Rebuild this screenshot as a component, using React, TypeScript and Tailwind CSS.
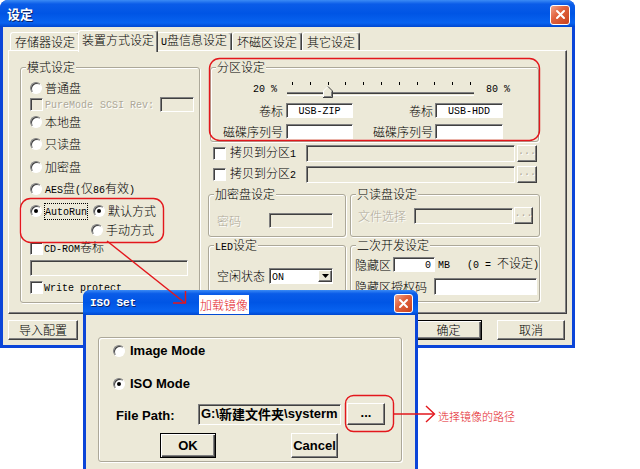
import React from 'react';

const raised =
  'border border-t-white border-l-white border-r-[#404040] border-b-[#404040] shadow-[inset_-1px_-1px_0_#808080] bg-[#ECE9D8]';
const sunken =
  'border border-t-[#808080] border-l-[#808080] border-r-white border-b-white shadow-[inset_1px_1px_0_#404040]';
const deflt =
  'border border-black shadow-[inset_1px_1px_0_#fff,inset_-1px_-1px_0_#404040,inset_-2px_-2px_0_#808080] bg-[#ECE9D8]';
const etched = 'rounded-[3px] border border-[#aca899] shadow-[inset_1px_1px_0_#fff,1px_1px_0_#fff]';
const dis = 'text-[#aca899] [text-shadow:1px_1px_0_#fff]';
const titleGrad =
  'bg-[linear-gradient(to_bottom,#3b8bf5_0%,#0a5ce8_15%,#0055e5_50%,#0863f0_85%,#0047d0_100%)]';

// 把 ASCII 部分换成等宽小字，模拟宋体的半角字符
function Mx({ s, className = '' }: { s: string; className?: string }) {
  const parts = s.split(/([\x20-\x7e]+)/).filter((p) => p !== '');
  return (
    <span className={`whitespace-pre ${className}`}>
      {parts.map((p, i) =>
        /^[\x20-\x7e]+$/.test(p) ? (
          <span key={i} className="font-['Liberation_Mono',monospace] text-[10px]">
            {p}
          </span>
        ) : (
          <span key={i}>{p}</span>
        )
      )}
    </span>
  );
}

function Group({ title, className = '', children }: { title: string; className?: string; children?: React.ReactNode }) {
  return (
    <div className={`relative ${etched} ${className}`}>
      <span className="absolute -top-[8px] left-[5px] px-[1px] bg-[#ECE9D8] leading-[14px]">
        <Mx s={title} />
      </span>
      {children}
    </div>
  );
}

function Radio({ on }: { on?: boolean }) {
  return (
    <span className="relative inline-flex shrink-0 w-[12px] h-[12px] rounded-full border border-t-[#808080] border-l-[#808080] border-r-white border-b-white bg-white shadow-[inset_1px_1px_0_#404040]">
      {on && <span className="absolute left-[3px] top-[3px] w-[4px] h-[4px] rounded-full bg-black" />}
    </span>
  );
}

function Check({ dim }: { dim?: boolean }) {
  return <span className={`inline-block shrink-0 w-[13px] h-[13px] ${sunken} ${dim ? 'bg-[#ECE9D8]' : 'bg-white'}`} />;
}

function Dots({ dim }: { dim?: boolean }) {
  return (
    <span className={`font-['Liberation_Mono',monospace] text-[10px] leading-none pb-[3px] ${dim ? dis : ''}`}>...</span>
  );
}

function CloseBtn({ className = '' }: { className?: string }) {
  return (
    <div
      className={`flex items-center justify-center rounded-[3px] border border-white bg-[linear-gradient(135deg,#f2a58c_0%,#e2643f_40%,#c9421d_100%)] ${className}`}
    >
      <svg width="11" height="11" viewBox="0 0 11 11">
        <path d="M2 2L9 9M9 2L2 9" stroke="#fff" strokeWidth="2" strokeLinecap="round" />
      </svg>
    </div>
  );
}

function Slider() {
  const ticks = Array.from({ length: 11 }, (_, i) => Math.round(10 + i * 17.8));
  return (
    <svg width="196" height="20" viewBox="0 0 196 20" className="ml-[5px] shrink-0">
      {ticks.map((x) => (
        <rect key={x} x={x} y={4} width={1} height={3} fill="#000" />
      ))}
      <rect x="5" y="14" width="187" height="1" fill="#808080" />
      <rect x="5" y="15" width="187" height="1" fill="#404040" />
      <rect x="5" y="17" width="187" height="1" fill="#fff" />
      <polygon points="41,19 41,13 46,8 51,13 51,19" fill="#ECE9D8" />
      <polyline points="41.5,19 41.5,13 46,8.5" fill="none" stroke="#fff" />
      <polyline points="46,8.5 50.5,13 50.5,19.5 41,19.5" fill="none" stroke="#404040" />
      <polyline points="49.5,13.5 49.5,18.5 42,18.5" fill="none" stroke="#808080" />
    </svg>
  );
}

function Tab({ active, children }: { active?: boolean; children: React.ReactNode }) {
  if (active)
    return (
      <div className="relative z-10 h-[22px] -mb-[2px] -mx-[2px] px-[3px] pb-[3px] flex items-center bg-[#ECE9D8] rounded-t-[3px] border border-b-0 border-t-white border-l-white border-r-[#404040] shadow-[inset_-1px_0_0_#808080]">
        {children}
      </div>
    );
  return (
    <div className="h-[18px] px-[4px] flex items-center rounded-t-[3px] border border-b-0 border-t-white border-l-white border-r-[#404040] shadow-[inset_-1px_0_0_#808080]">
      {children}
    </div>
  );
}

export default function App() {
  return (
    <div className="relative w-[640px] h-[469px] overflow-hidden bg-white text-black text-[12px] leading-[14px] font-light font-['Noto_Sans_CJK_SC',sans-serif]">
      {/* 主窗口 */}
      <div className="w-[575px] h-[348px] flex flex-col rounded-t-[8px] overflow-hidden bg-[#0b45d8]">
        <div className={`h-[27px] shrink-0 flex items-center justify-between pl-[7px] pr-[5px] ${titleGrad}`}>
          <span className="text-white font-bold text-[13px] [text-shadow:1px_1px_0_#0a246a]">设定</span>
          <CloseBtn className="w-[20px] h-[20px] mt-[2px]" />
        </div>

        <div className="flex-1 mx-[3px] mb-[3px] bg-[#ECE9D8] flex flex-col">
          {/* 标签页 */}
          <div className="relative z-10 h-[23px] shrink-0 flex items-end pl-[7px]">
            <Tab>存储器设定</Tab>
            <Tab active>装置方式设定</Tab>
            <Tab>
              <Mx s="U盘信息设定" />
            </Tab>
            <Tab>坏磁区设定</Tab>
            <Tab>其它设定</Tab>
          </div>

          {/* 面板 */}
          <div className="mx-[5px] h-[264px] shrink-0 flex pt-[16px] pl-[11px] border border-t-white border-l-white border-r-[#404040] border-b-[#404040] shadow-[inset_-1px_-1px_0_#808080]">
            <Group title="模式设定" className="w-[180px] h-[236px] pt-[12px] pl-[9px] flex flex-col">
              <div className="h-[16px] flex items-center">
                <Radio />
                <span className="ml-[3px]">普通盘</span>
              </div>
              <div className="h-[16px] flex items-center">
                <Check dim />
                <Mx s="PureMode" className={`ml-[2px] ${dis}`} />
                <Mx s="SCSI Rev:" className={`ml-[7px] ${dis}`} />
                <span className={`ml-[6px] w-[34px] h-[15px] ${sunken} bg-[#ECE9D8]`} />
              </div>
              <div className="h-[20px] flex items-center">
                <Radio />
                <span className="ml-[3px]">本地盘</span>
              </div>
              <div className="h-[24px] flex items-center">
                <Radio />
                <span className="ml-[3px]">只读盘</span>
              </div>
              <div className="h-[22px] flex items-center">
                <Radio />
                <span className="ml-[3px]">加密盘</span>
              </div>
              <div className="h-[22px] flex items-center">
                <Radio />
                <Mx s="AES盘(仅86有效)" className="ml-[3px]" />
              </div>
              <div className="h-[22px] flex items-center">
                <Radio on />
                <Mx s="AutoRun" className="ml-[2px] border border-dotted border-black leading-[12px]" />
                <span className="ml-[5px] flex items-center">
                  <Radio on />
                </span>
                <span className="ml-[3px]">默认方式</span>
              </div>
              <div className="h-[16px] flex items-center pl-[61px]">
                <Radio />
                <span className="ml-[3px]">手动方式</span>
              </div>
              <div className="h-[20px] flex items-center">
                <Check />
                <Mx s="CD-ROM卷标" className="ml-[1px]" />
              </div>
              <div className={`mt-[2px] w-[158px] h-[16px] ${sunken} bg-[#ECE9D8]`} />
              <div className="h-[22px] flex items-center">
                <Check />
                <Mx s="Write protect" className="ml-[1px]" />
              </div>
            </Group>

            <div className="ml-[8px] w-[332px] flex flex-col">
              <Group title="分区设定" className="ml-[2px] w-[329px] h-[75px] pt-[10px] shrink-0">
                <div className="h-[20px] flex items-center pl-[42px]">
                  <Mx s="20 %" className="inline-block w-[24px]" />
                  <Slider />
                  <Mx s="80 %" className="ml-[8px]" />
                </div>
                <div className="mt-[5px] grid grid-cols-[75px_67px_82px_68px] gap-y-[6px] items-center">
                  <span className="text-right pr-[3px]">卷标</span>
                  <div className={`h-[15px] ${sunken} bg-white flex items-center justify-center`}>
                    <Mx s="USB-ZIP" />
                  </div>
                  <span className="text-right pr-[2px]">卷标</span>
                  <div className={`h-[15px] ${sunken} bg-white flex items-center justify-center`}>
                    <Mx s="USB-HDD" />
                  </div>
                  <span className="text-right pr-[3px]">磁碟序列号</span>
                  <div className={`h-[15px] ${sunken} bg-white`} />
                  <span className="text-right pr-[2px]">磁碟序列号</span>
                  <div className={`h-[15px] ${sunken} bg-white`} />
                </div>
              </Group>

              <div className="mt-[2px] h-[18px] flex items-center shrink-0">
                <span className="ml-[5px] flex">
                  <Check />
                </span>
                <Mx s="拷贝到分区1" className="ml-[4px] inline-block w-[76px]" />
                <div className={`w-[209px] h-[17px] ${sunken} bg-[#ECE9D8]`} />
                <div className={`ml-[2px] w-[20px] h-[17px] ${raised} flex items-center justify-center`}>
                  <Dots dim />
                </div>
              </div>
              <div className="mt-[3px] h-[18px] flex items-center shrink-0">
                <span className="ml-[5px] flex">
                  <Check />
                </span>
                <Mx s="拷贝到分区2" className="ml-[4px] inline-block w-[76px]" />
                <div className={`w-[209px] h-[17px] ${sunken} bg-[#ECE9D8]`} />
                <div className={`ml-[2px] w-[20px] h-[17px] ${raised} flex items-center justify-center`}>
                  <Dots dim />
                </div>
              </div>

              <div className="mt-[11px] flex shrink-0">
                <Group title="加密盘设定" className="w-[138px] h-[43px] pt-[18px] pl-[8px]">
                  <div className="flex items-center">
                    <span className={`w-[52px] ${dis}`}>密码</span>
                    <div className={`w-[64px] h-[15px] ${sunken} bg-[#ECE9D8]`} />
                  </div>
                </Group>
                <Group title="只读盘设定" className="ml-[4px] w-[190px] h-[43px] pt-[12px] pl-[7px]">
                  <div className="flex items-center">
                    <span className={`w-[56px] ${dis}`}>文件选择</span>
                    <div className={`w-[99px] h-[16px] ${sunken} bg-[#ECE9D8]`} />
                    <div className={`ml-[1px] w-[19px] h-[17px] ${raised} flex items-center justify-center`}>
                      <Dots dim />
                    </div>
                  </div>
                </Group>
              </div>

              <div className="mt-[8px] flex shrink-0">
                <Group title="LED设定" className="w-[138px] h-[57px] pt-[22px] pl-[8px]">
                  <div className="flex items-center">
                    <span className="w-[52px]">空闲状态</span>
                    <div className={`w-[64px] h-[16px] ${sunken} bg-white flex items-center justify-between pl-[2px]`}>
                      <Mx s="ON" />
                      <div className={`w-[14px] h-[12px] ${raised} flex items-center justify-center`}>
                        <svg width="7" height="4" viewBox="0 0 7 4">
                          <path d="M0 0H7L3.5 4Z" fill="#000" />
                        </svg>
                      </div>
                    </div>
                  </div>
                </Group>
                <Group title="二次开发设定" className="ml-[4px] w-[190px] h-[57px] pt-[10px] pl-[4px]">
                  <div className="flex items-center">
                    <span className="w-[39px]">隐藏区</span>
                    <div className={`w-[42px] h-[15px] ${sunken} bg-white flex items-center justify-end pr-[3px]`}>
                      <Mx s="0" />
                    </div>
                    <Mx s="MB" className="ml-[3px]" />
                    <Mx s="(0 = 不设定)" className="ml-[17px]" />
                  </div>
                  <div className="mt-[5px] flex items-center">
                    <span className="w-[79px]">隐藏区授权码</span>
                    <div className={`w-[103px] h-[17px] ${sunken} bg-white`} />
                  </div>
                </Group>
              </div>
            </div>
          </div>

          {/* 底部按钮 */}
          <div className="mt-[6px] h-[20px] flex pl-[5px] pr-[7px] shrink-0">
            <div className={`w-[70px] h-[20px] ${raised} flex items-center justify-center`}>导入配置</div>
            <div className={`ml-auto w-[67px] h-[20px] ${deflt} flex items-center justify-center`}>确定</div>
            <div className={`ml-[15px] w-[68px] h-[20px] ${raised} flex items-center justify-center`}>取消</div>
          </div>
        </div>
      </div>

      {/* ISO Set 对话框 */}
      <div className="absolute left-[83px] top-[290px] z-10 w-[335px] h-[185px] flex flex-col rounded-t-[7px] overflow-hidden bg-[#0b45d8]">
        <div className={`h-[25px] shrink-0 flex items-center justify-between pl-[7px] pr-[5px] ${titleGrad}`}>
          <span className="text-white font-bold font-['Liberation_Mono',monospace] text-[11px] [text-shadow:1px_1px_0_#0a246a]">
            ISO Set
          </span>
          <CloseBtn className="w-[19px] h-[19px] mt-[2px]" />
        </div>
        <div className="flex-1 mx-[3px] bg-[#ECE9D8] pt-[22px] pl-[12px] font-['Liberation_Sans',sans-serif] font-bold text-[13px]">
          <div className={`${etched} w-[304px] h-[125px] flex flex-col`}>
            <div className="mt-[3px] h-[20px] flex items-center pl-[14px]">
              <Radio />
              <span className="ml-[5px]">Image Mode</span>
            </div>
            <div className="mt-[13px] h-[20px] flex items-center pl-[14px]">
              <Radio on />
              <span className="ml-[5px]">ISO Mode</span>
            </div>
            <div className="mt-[9px] h-[22px] flex items-center pl-[17px]">
              <span className="w-[82px] pt-[3px]">File Path:</span>
              <div className={`w-[143px] h-[21px] ${sunken} bg-[#ECE9D8] flex items-center pl-[2px] whitespace-nowrap`}>
                <span>{'G:\\'}</span>
                <span className="font-['Noto_Sans_CJK_SC',sans-serif] text-[13px]">新建文件夹</span>
                <span>{'\\systerm'}</span>
              </div>
              <div className={`ml-[6px] w-[38px] h-[22px] ${raised} flex items-center justify-center`}>
                <span className="leading-none pb-[4px]">...</span>
              </div>
            </div>
            <div className="mt-[8px] h-[25px] flex pl-[61px]">
              <div className={`w-[56px] h-[25px] ${deflt} flex items-center justify-center`}>OK</div>
              <div className={`ml-[75px] w-[47px] h-[25px] ${raised} flex items-center justify-center`}>Cancel</div>
            </div>
          </div>
        </div>
      </div>

      {/* 红色标注 */}
      <svg
        className="absolute left-0 top-0 z-20 pointer-events-none"
        width="640"
        height="469"
        viewBox="0 0 640 469"
        fill="none"
        stroke="#e3171c"
        strokeWidth="1.4"
      >
        <rect x="20.5" y="198.5" width="143" height="44" rx="10" />
        <rect x="209.5" y="58.5" width="330" height="82" rx="10" />
        <rect x="345.5" y="395.5" width="48" height="36" rx="8" />
        <path d="M107 241L185 303" />
        <path d="M173 303H185.5V291" />
        <path d="M394 414H434" />
        <path d="M426 406L434.5 414L426 422" />
      </svg>
      <div className="absolute left-[199px] top-[295px] z-20 w-[50px] h-[19px] bg-white text-[#e3171c] flex items-center justify-center">
        加载镜像
      </div>
      <div className="absolute left-[438px] top-[409px] z-20 text-[11px] text-[#e3171c]">选择镜像的路径</div>
    </div>
  );
}
